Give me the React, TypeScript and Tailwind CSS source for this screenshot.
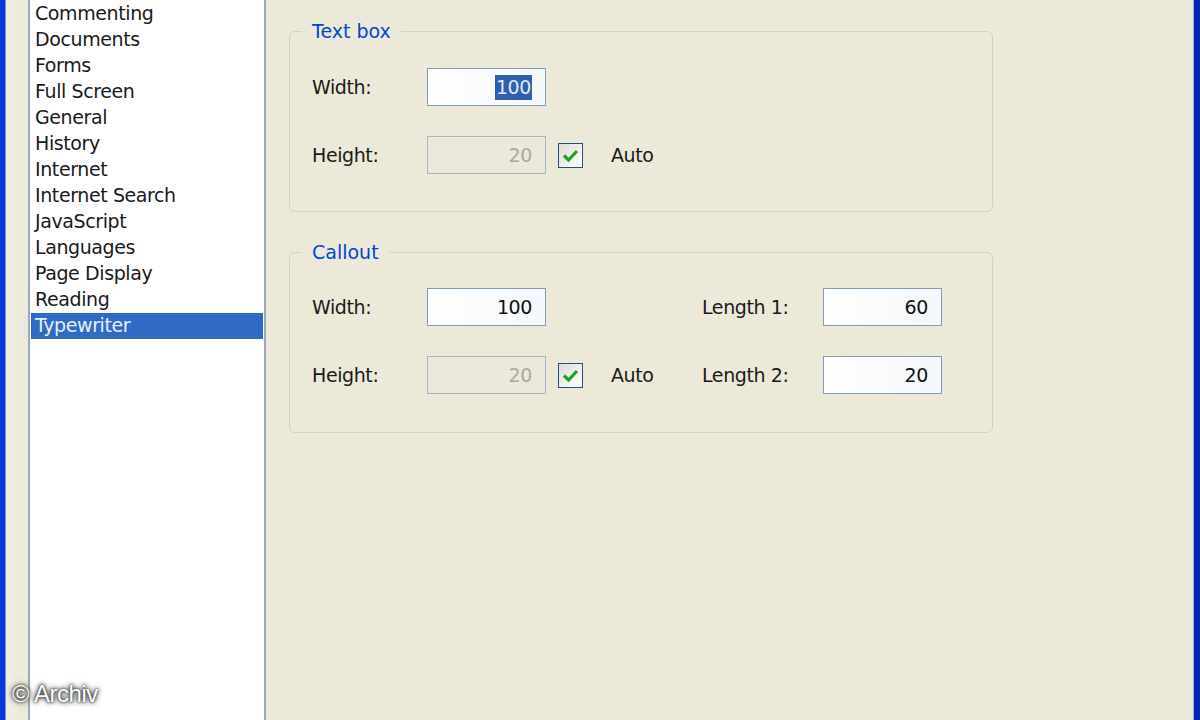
import type { ReactNode } from "react";

const items = [
  "Commenting",
  "Documents",
  "Forms",
  "Full Screen",
  "General",
  "History",
  "Internet",
  "Internet Search",
  "JavaScript",
  "Languages",
  "Page Display",
  "Reading",
  "Typewriter",
];

const font = { fontFamily: '"DejaVu Sans", Verdana, sans-serif' };

function Field({
  value,
  disabled,
  selected,
}: {
  value: string;
  disabled?: boolean;
  selected?: boolean;
}) {
  return (
    <div
      className={
        disabled
          ? "flex h-[38px] w-[119px] items-center justify-end border border-[#a8b5c0] bg-[#ebe8dc] pr-[13px] text-[#aca899]"
          : "flex h-[38px] w-[119px] items-center justify-end border border-[#7f9db9] bg-gradient-to-r from-white to-[#f4f7fb] pr-[13px] text-[#111]"
      }
    >
      {selected ? (
        <span className="bg-[#2f5fb0] px-[1px] leading-[25px] text-[#dfe8f7]">{value}</span>
      ) : (
        <span>{value}</span>
      )}
    </div>
  );
}

function Check() {
  return (
    <div className="flex h-[25px] w-[25px] items-center justify-center border border-[#1c5180] bg-gradient-to-br from-[#dcdcd7] to-white">
      <svg width="17" height="15" viewBox="0 0 17 15">
        <path d="M2 7.5 L6.5 12 L15 3" fill="none" stroke="#21a121" strokeWidth="3.2" />
      </svg>
    </div>
  );
}

function Group({ title, children }: { title: string; children: ReactNode }) {
  return (
    <fieldset className="w-[704px] rounded-[6px] border border-[#d6d2c0] pl-[22px]">
      <legend className="-ml-[10px] px-[10px] leading-[24px] tracking-[0px] text-[#0046d5]">
        {title}
      </legend>
      {children}
    </fieldset>
  );
}

function Row({ label, children }: { label: string; children: ReactNode }) {
  return (
    <div className="flex items-center">
      <span className="w-[115px]">{label}</span>
      {children}
    </div>
  );
}

export default function App() {
  return (
    <div
      className="relative flex h-[720px] w-[1200px] overflow-hidden bg-[#ece9d8] text-[19px] tracking-[-0.4px] text-[#1a1a1a]"
      style={font}
    >
      <div className="h-full w-[6px] border-r border-[#6f8fe8] bg-[#0a3ad6]" />
      <div className="h-full w-[22px] bg-gradient-to-r from-[#f1efe4] to-[#ece9d8]" />

      <div className="h-full w-[238px] border-x-2 border-[#9aa9bd] bg-white pt-[1px]">
        {items.map((item) => (
          <div
            key={item}
            className={
              item === "Typewriter"
                ? "mx-[1px] h-[26px] bg-[#316ac5] pl-[4px] leading-[25px] text-[#e6eefb]"
                : "h-[26px] pl-[5px] leading-[25px]"
            }
          >
            {item}
          </div>
        ))}
      </div>

      <div className="flex flex-1 flex-col gap-[28px] pl-[23px] pt-[19px]">
        <Group title="Text box">
          <div className="flex flex-col gap-[30px] pb-[37px] pt-[25px]">
            <Row label="Width:">
              <Field value="100" selected />
            </Row>
            <Row label="Height:">
              <Field value="20" disabled />
              <div className="ml-[12px]">
                <Check />
              </div>
              <span className="ml-[28px]">Auto</span>
            </Row>
          </div>
        </Group>

        <Group title="Callout">
          <div className="flex flex-col gap-[30px] pb-[38px] pt-[24px]">
            <Row label="Width:">
              <Field value="100" />
              <span className="ml-[156px] w-[121px]">Length 1:</span>
              <Field value="60" />
            </Row>
            <Row label="Height:">
              <Field value="20" disabled />
              <div className="ml-[12px]">
                <Check />
              </div>
              <span className="ml-[28px] w-[91px]">Auto</span>
              <span className="w-[121px]">Length 2:</span>
              <Field value="20" />
            </Row>
          </div>
        </Group>
      </div>

      <div className="h-full w-[7px] border-l border-[#8ab0f0] bg-[#0a22b0]" />

      <div
        className="absolute bottom-[8px] left-[12px] text-[24px] tracking-[-0.5px] text-white"
        style={{
          fontFamily: '"Liberation Sans", Arial, sans-serif',
          textShadow: "0 0 2px #222, 0 0 4px #333, 0 0 6px #555",
        }}
      >
        © Archiv
      </div>
    </div>
  );
}
